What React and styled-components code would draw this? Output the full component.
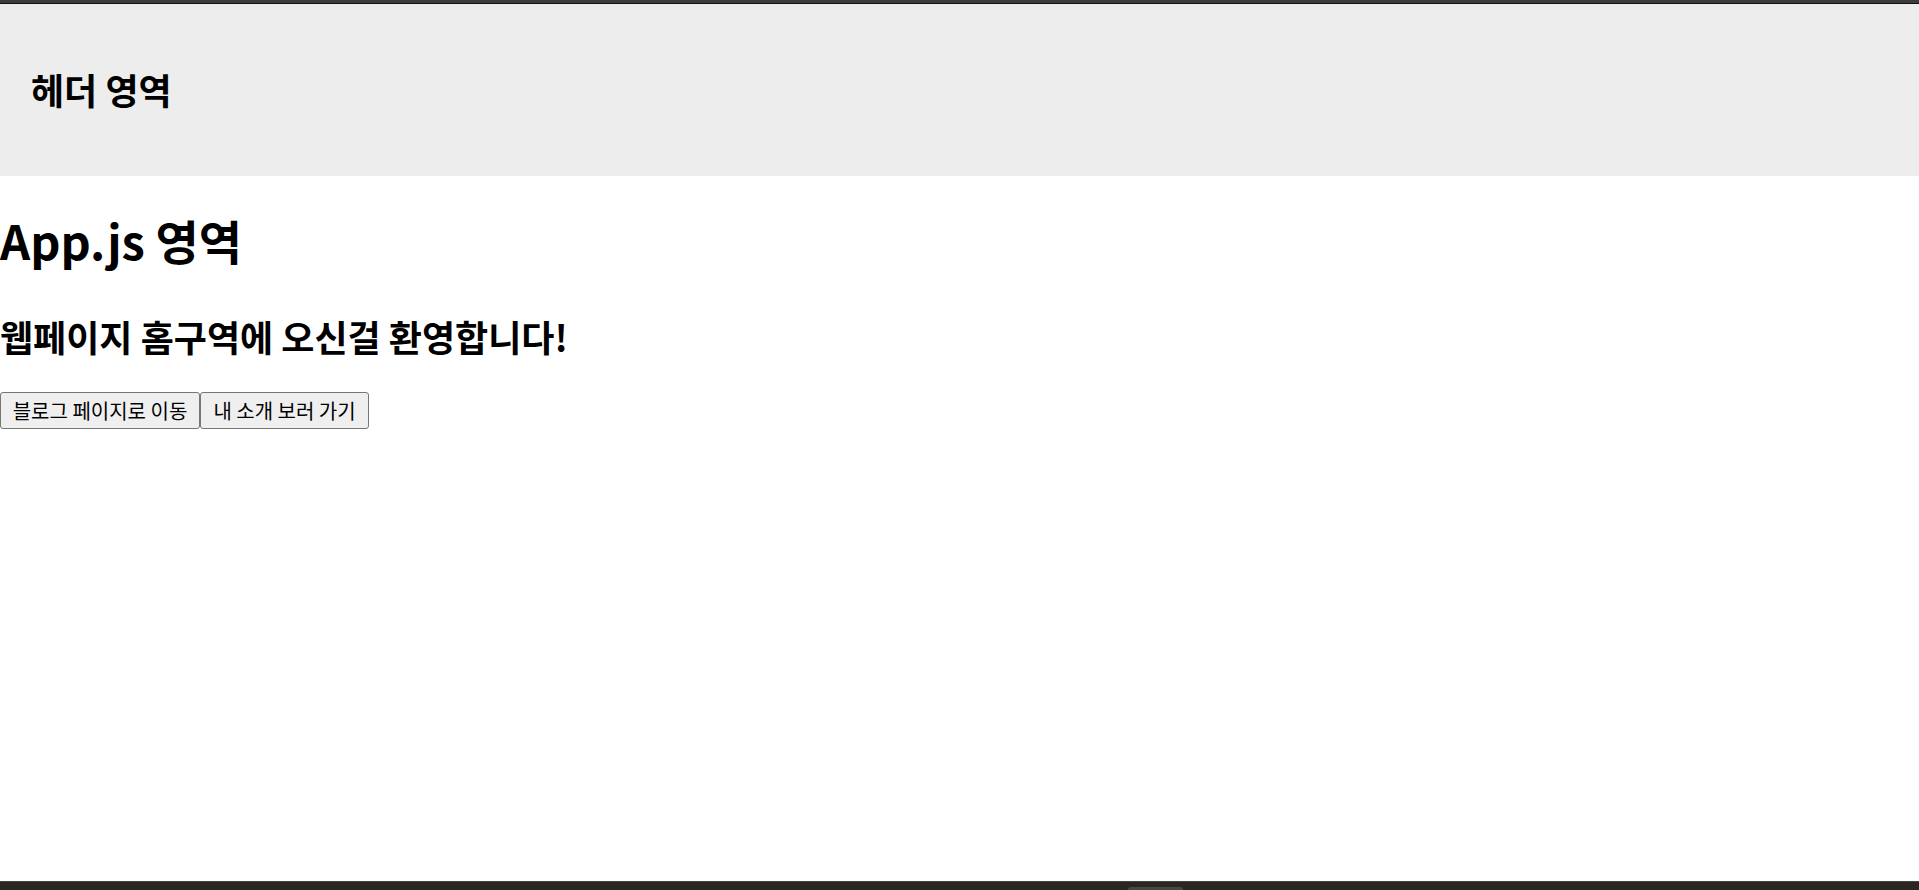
import React from "react";
import styled, { createGlobalStyle } from "styled-components";

const GlobalStyle = createGlobalStyle`
  html, body {
    margin: 0;
    padding: 0;
    background: #ffffff;
  }
  body {
    font-family: "Noto Sans CJK KR", "Noto Sans", sans-serif;
    color: #000;
  }
`;

const Page = styled.div`
  display: flex;
  flex-direction: column;
  height: 100vh;
  overflow: hidden;
`;

// window frame strips top and bottom
const TopChrome = styled.div`
  flex: 0 0 3px;
  background: #3c3c3c;
  border-bottom: 1px solid #111;
`;

const BottomChrome = styled.div`
  flex: 0 0 9px;
  display: flex;
  justify-content: center;
  align-items: flex-end;
  background: #2a2620;
  border-top: 1px solid #444;
  box-sizing: border-box;
  padding-left: 392px;
`;

const TaskTab = styled.div`
  width: 55px;
  height: 3px;
  background: #4a4640;
  border-radius: 3px 3px 0 0;
`;

const Header = styled.header`
  flex: 0 0 172px;
  display: flex;
  align-items: center;
  padding-left: 31px;
  background: #ededed;
  h1 {
    margin: 0;
    font-size: 36px;
    line-height: 1.2;
    font-weight: 700;
  }
`;

const Main = styled.main`
  flex: 1;
`;

const Title = styled.h1`
  margin: 36px 0 0;
  font-size: 47px;
  line-height: 1.2;
  font-weight: 700;
`;

const Welcome = styled.h3`
  margin: 47px 0 0;
  font-size: 36px;
  line-height: 1.2;
  font-weight: 700;
`;

const Buttons = styled.div`
  display: flex;
  margin-top: 33px;
`;

const Button = styled.button`
  width: ${(p) => p.$w}px;
  height: 37px;
  display: flex;
  align-items: center;
  justify-content: center;
  padding: 0;
  font-family: "Noto Sans CJK KR", sans-serif;
  font-size: 20px;
  color: #000;
  background: #efefef;
  border: 1px solid #767676;
  border-radius: 3px;
  cursor: pointer;
`;

function App() {
  return (
    <>
      <GlobalStyle />
      <Page>
        <TopChrome />
        <Header>
          <h1>헤더 영역</h1>
        </Header>
        <Main>
          <Title>App.js 영역</Title>
          <Welcome>웹페이지 홈구역에 오신걸 환영합니다!</Welcome>
          <Buttons>
            <Button $w={200}>블로그 페이지로 이동</Button>
            <Button $w={169}>내 소개 보러 가기</Button>
          </Buttons>
        </Main>
        <BottomChrome>
          <TaskTab />
        </BottomChrome>
      </Page>
    </>
  );
}

export default App;
